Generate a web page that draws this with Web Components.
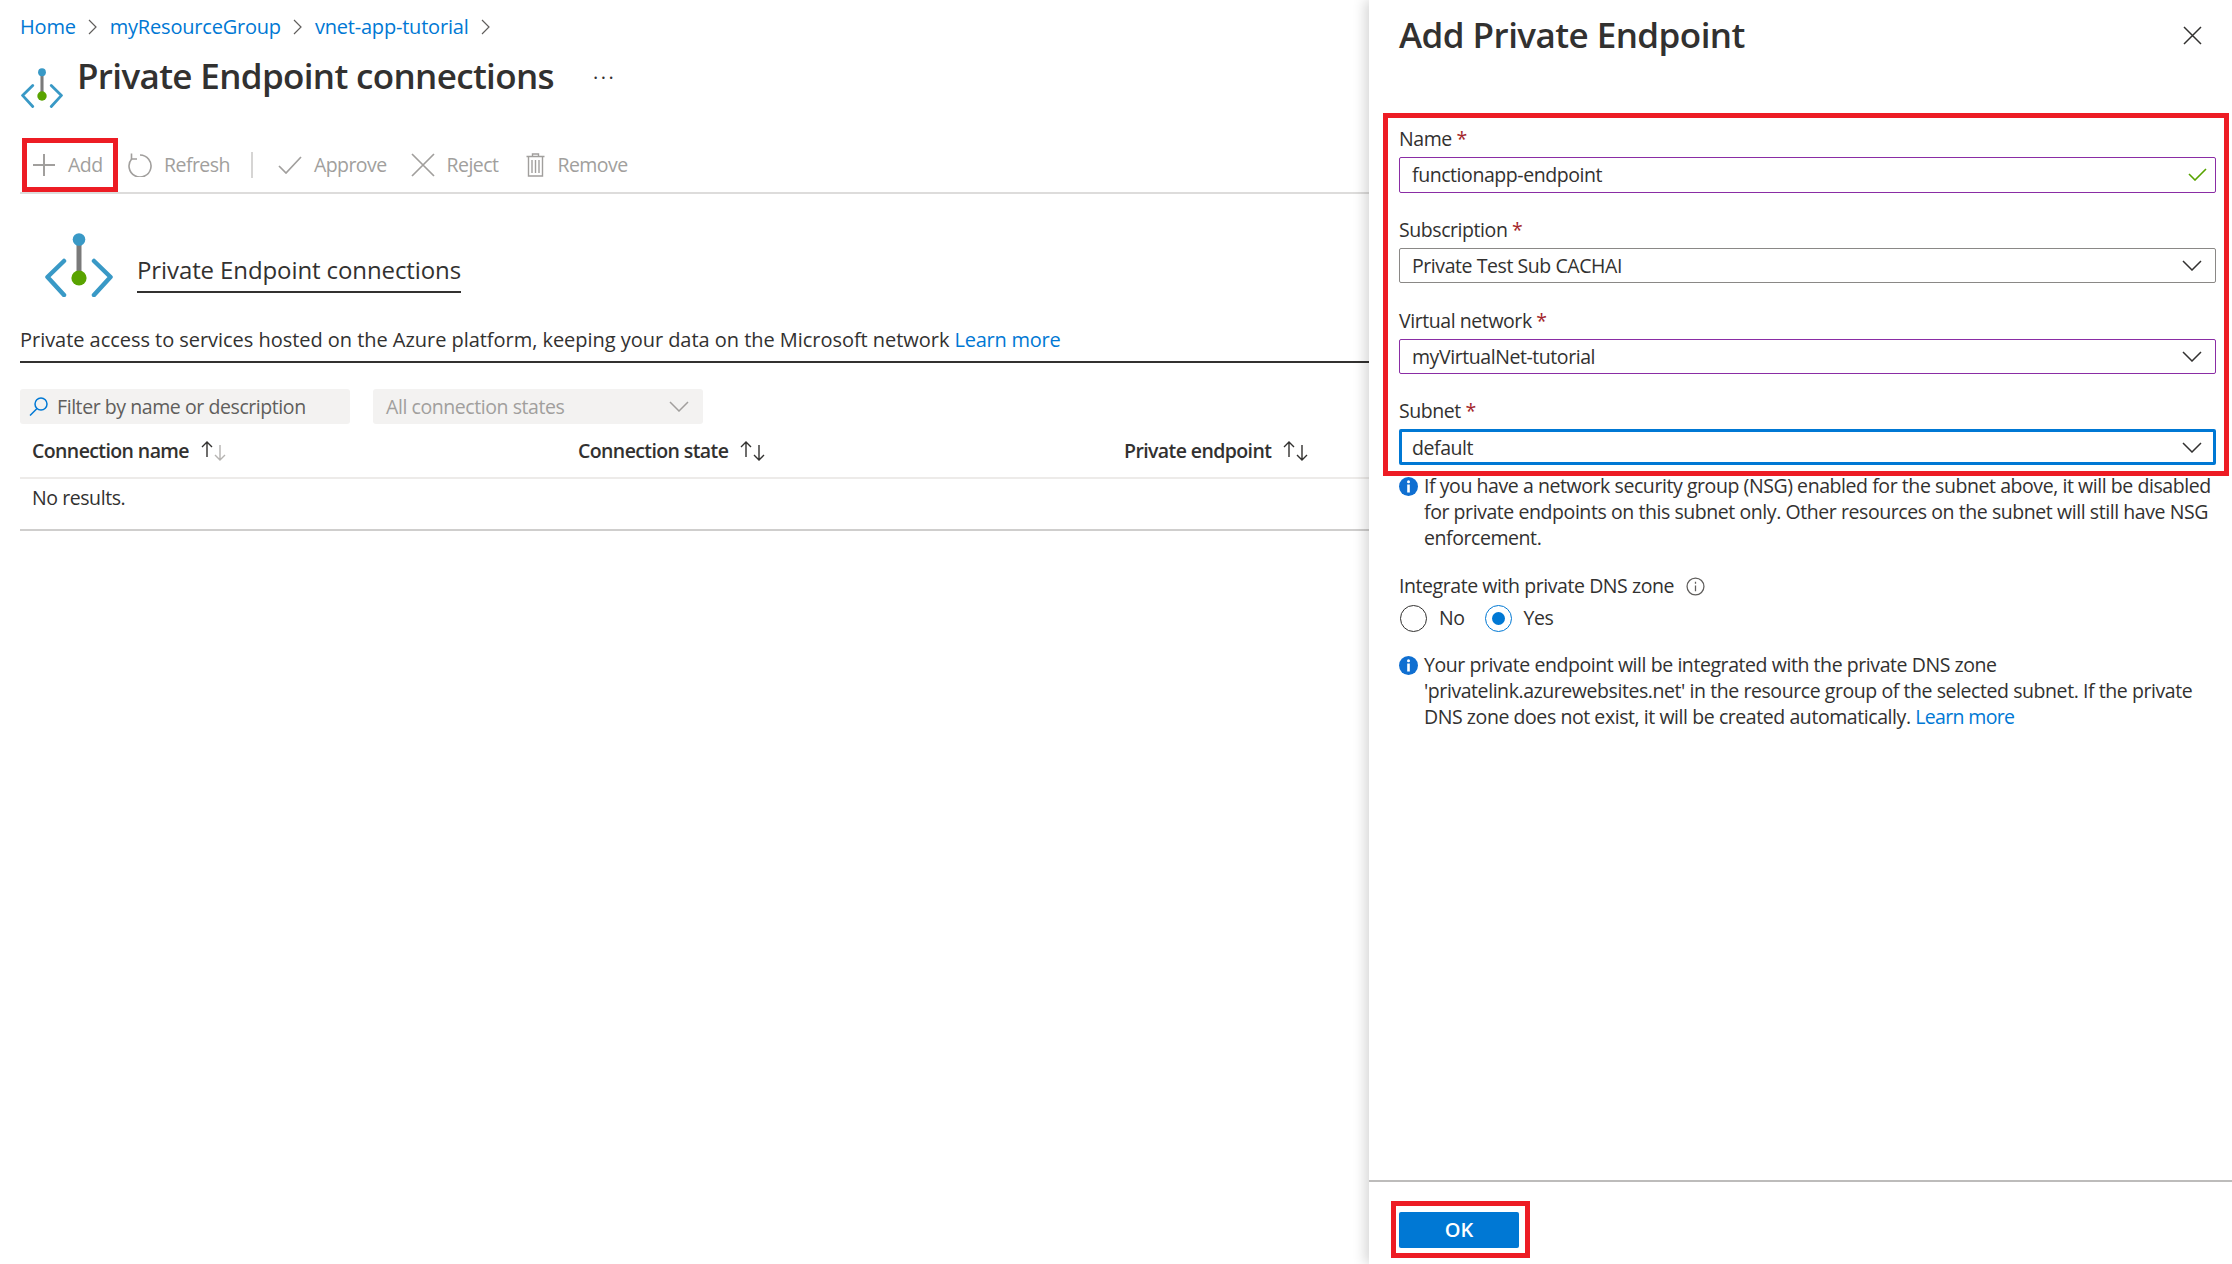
<!DOCTYPE html>
<html lang="en">
<head>
<meta charset="utf-8">
<title>Private Endpoint connections</title>
<style>
  html, body { margin: 0; height: 100%; background: #fff; }
  body { font: 19.500px/30px "Open Sans", "Liberation Sans", sans-serif; letter-spacing: -0.43px; color: #323130; overflow: hidden; }
  a { color: #0078d4; text-decoration: none; }
</style>
</head>
<body>
<pe-page></pe-page>

<script>
const ICONS = {
  endpoint: `<svg viewBox="0 0 68 64" width="100%" height="100%"><path d="M34 6v40" stroke="#7a7a7a" stroke-width="5"/><circle cx="34" cy="6.500" r="6.300" fill="#3999c6"/><circle cx="34" cy="45" r="7.600" fill="#59a300"/><path d="M19 28 2.500 44 19 62M49 28 65.500 44 49 62" fill="none" stroke="#3999c6" stroke-width="4.500" stroke-linecap="round" stroke-linejoin="round"/></svg>`,
  plus: `<svg viewBox="0 0 22 22" width="22" height="22"><path d="M11 0v22M0 11h22" stroke="currentColor" stroke-width="2"/></svg>`,
  refresh: `<svg viewBox="0 0 24 24" width="24" height="24" fill="none" stroke="currentColor" stroke-width="1.600"><path d="M12 2a11 11 0 1 1-8.200 3.700"/><path d="M3.500 0.500v5.500h5.500"/></svg>`,
  check: `<svg viewBox="0 0 24 18" width="24" height="18" fill="none" stroke="currentColor" stroke-width="1.700"><path d="M1 10l7 7L23 1"/></svg>`,
  cross: `<svg viewBox="0 0 24 24" width="24" height="24" fill="none" stroke="currentColor" stroke-width="1.700"><path d="M1 1l22 22M23 1 1 23"/></svg>`,
  trash: `<svg viewBox="0 0 19 24" width="19" height="24" fill="none" stroke="currentColor" stroke-width="1.400"><path d="M.5 3.500h18M6.500 3.500V1h6v2.500M2.500 3.500V23h14V3.500M6 7v13M9.500 7v13M13 7v13"/></svg>`,
  search: `<svg viewBox="0 0 19 19" width="19" height="19" fill="none" stroke="#0078d4" stroke-width="1.500"><circle cx="12" cy="7" r="6"/><path d="M8 11.500 1 18.500"/></svg>`,
  chevron: `<svg viewBox="0 0 20 11" width="20" height="11" fill="none" stroke="currentColor" stroke-width="1.500"><path d="M1 1l9 9 9-9"/></svg>`,
  close: `<svg viewBox="0 0 19 19" width="19" height="19" fill="none" stroke="#323130" stroke-width="1.500"><path d="M1 1l17 17M18 1 1 18"/></svg>`,
  valid: `<svg viewBox="0 0 19 13" width="19" height="13" fill="none" stroke="#57a300" stroke-width="1.600"><path d="M1 6l6 6L18 1"/></svg>`,
  info: `<svg viewBox="0 0 19 19" width="19" height="19"><circle cx="9.500" cy="9.500" r="9.500" fill="#0f6fd1"/><circle cx="9.500" cy="4.800" r="1.500" fill="#fff"/><rect x="8.200" y="7.500" width="2.600" height="8" fill="#fff"/></svg>`,
  infoOutline: `<svg viewBox="0 0 18 18" width="19" height="19" fill="none" stroke="#605e5c" stroke-width="1.200"><circle cx="9" cy="9" r="8"/><path d="M9 8v5.500M9 4.500v1.800"/></svg>`
};

function sortIcon(muted) {
  return `<svg viewBox="0 0 26 20" width="26" height="20" fill="none" stroke-width="1.400"><path d="M6 16V1M1 6l5-5 5 5" stroke="#323130"/><path d="M19 4v15M14 14l5 5 5-5" stroke="${muted ? '#b5b3b1' : '#323130'}"/></svg>`;
}

class PeBreadcrumb extends HTMLElement {
  connectedCallback() {
    const items = (this.getAttribute('items') || '').split('|');
    this.attachShadow({ mode: 'open' });
    this.shadowRoot.innerHTML = `
      <style>
        :host { display: flex; align-items: center; height: 54px; color: #0078d4; font-size: 20px; letter-spacing: -0.2px; }
        span { margin-right: 12px; }
        svg { margin-right: 13px; }
      </style>
      ${items.map(i => `<span>${i}</span><svg viewBox="0 0 9 16" width="9" height="16" fill="none" stroke="#605e5c" stroke-width="1.200"><path d="M1 1l7 7-7 7"/></svg>`).join('')}
    `;
  }
}

class PeIcon extends HTMLElement {
  connectedCallback() {
    this.attachShadow({ mode: 'open' });
    this.shadowRoot.innerHTML = `
      <style>:host { display: inline-flex; flex: none; align-items: center; justify-content: center; }</style>
      ${ICONS[this.getAttribute('name')]}
    `;
  }
}

class PeToolButton extends HTMLElement {
  connectedCallback() {
    this.attachShadow({ mode: 'open' });
    this.shadowRoot.innerHTML = `
      <style>
        :host { display: inline-flex; align-items: center; color: #a19f9d; letter-spacing: -0.55px; }
        pe-icon { margin-right: 12px; }
      </style>
      <pe-icon name="${this.getAttribute('icon')}"></pe-icon><slot></slot>
    `;
  }
}

class PeCallout extends HTMLElement {
  connectedCallback() {
    this.attachShadow({ mode: 'open' });
    this.shadowRoot.innerHTML = `
      <style>
        :host { display: flex; align-items: center; box-sizing: border-box; border: 5px solid #ed1c24; }
      </style>
      <slot></slot>
    `;
  }
}

class PeToolbar extends HTMLElement {
  connectedCallback() {
    this.attachShadow({ mode: 'open' });
    this.shadowRoot.innerHTML = `
      <style>
        :host { display: flex; align-items: center; height: 54px; border-bottom: 2px solid #dddcdb; }
        .add { width: 96px; height: 54px; margin-left: 2px; padding-left: 6px; }
        .add span { margin-left: 1px; }
        .sep { width: 2px; height: 26px; background: #d6d5d4; }
        .refresh { margin-left: 10px; margin-right: 21px; }
        .approve { margin-left: 25px; }
        .reject { margin-left: 24px; }
        .remove { margin-left: 28px; }
      </style>
      <pe-callout class="add"><pe-tool-button icon="plus"><span>Add</span></pe-tool-button></pe-callout>
      <pe-tool-button class="refresh" icon="refresh">Refresh</pe-tool-button>
      <div class="sep"></div>
      <pe-tool-button class="approve" icon="check">Approve</pe-tool-button>
      <pe-tool-button class="reject" icon="cross">Reject</pe-tool-button>
      <pe-tool-button class="remove" icon="trash">Remove</pe-tool-button>
    `;
  }
}

class PeIntro extends HTMLElement {
  connectedCallback() {
    this.attachShadow({ mode: 'open' });
    this.shadowRoot.innerHTML = `
      <style>
        :host { display: block; }
        .top { display: flex; padding: 39px 0 0 25px; height: 65px; }
        pe-icon { width: 68px; height: 64px; }
        h2 { margin: 18px 0 0 24px; height: 40px; font-size: 24px; font-weight: 500; line-height: 38px; letter-spacing: -0.1px; border-bottom: 2px solid #323130; }
        p { margin: 28px 0 0; height: 30px; padding-bottom: 5px; border-bottom: 2px solid #323130; font-size: 20px; line-height: 28px; letter-spacing: -0.04px; }
      </style>
      <div class="top">
        <pe-icon name="endpoint"></pe-icon>
        <h2><slot name="heading"></slot></h2>
      </div>
      <p><slot></slot></p>
    `;
  }
}

class PeFilters extends HTMLElement {
  connectedCallback() {
    this.attachShadow({ mode: 'open' });
    this.shadowRoot.innerHTML = `
      <style>
        :host { display: flex; gap: 23px; margin-top: 26px; }
        .box { box-sizing: border-box; display: flex; align-items: center; width: 330px; height: 35px; background: #f3f2f1; border-radius: 3px; line-height: 32px; }
        .search { padding-left: 9px; gap: 9px; color: #605e5c; }
        .state { padding: 0 14px 0 13px; justify-content: space-between; color: #a19f9d; }
      </style>
      <div class="box search"><pe-icon name="search"></pe-icon><span>Filter by name or description</span></div>
      <div class="box state"><span>All connection states</span><pe-icon name="chevron"></pe-icon></div>
    `;
  }
}

class PeTable extends HTMLElement {
  connectedCallback() {
    this.attachShadow({ mode: 'open' });
    this.shadowRoot.innerHTML = `
      <style>
        :host { display: block; }
        .head, .row { display: grid; grid-template-columns: 546px 546px 1fr; padding-left: 12px; }
        .head { height: 53px; align-items: center; border-bottom: 2px solid #edebe9; font-weight: 600; letter-spacing: -0.6px; line-height: 27px; }
        .head div { display: flex; align-items: center; gap: 12px; }
        .row { height: 46px; padding-top: 4px; border-bottom: 2px solid #cfcecd; align-items: start; }
      </style>
      <div class="head">
        <div>Connection name ${sortIcon(true)}</div>
        <div>Connection state ${sortIcon(false)}</div>
        <div>Private endpoint ${sortIcon(false)}</div>
      </div>
      <div class="row"><div><slot></slot></div></div>
    `;
  }
}

class PeField extends HTMLElement {
  connectedCallback() {
    const tone = this.getAttribute('tone') || 'plain';
    const select = this.hasAttribute('select');
    this.attachShadow({ mode: 'open' });
    this.shadowRoot.innerHTML = `
      <style>
        :host { display: block; margin-bottom: 22.300px; }
        :host(:last-of-type) { margin-bottom: 0; }
        label { display: block; height: 30px; margin-bottom: 3px; line-height: 29px; }
        b { color: #a4262c; font-weight: 400; }
        .input { box-sizing: border-box; display: flex; align-items: center; justify-content: space-between; height: 35.500px; padding: 0 8px 0 12px; border-radius: 2px; border: 1.500px solid #8a8886; color: #323130; line-height: 29px; }
        .select { padding-right: 13px; }
        .violet { border-color: #8a2da5; }
        .focus { border: 3px solid #0078d4; padding-left: 10px; padding-right: 11px; }
      </style>
      <label>${this.getAttribute('label')} <b>*</b></label>
      <div class="input ${tone} ${select ? 'select' : ''}"><span><slot></slot></span><pe-icon name="${select ? 'chevron' : 'valid'}"></pe-icon></div>
    `;
  }
}

class PeInfoNote extends HTMLElement {
  connectedCallback() {
    this.attachShadow({ mode: 'open' });
    this.shadowRoot.innerHTML = `
      <style>
        :host { display: flex; gap: 6px; line-height: 26px; margin-left: 30px; margin-right: 14px; }
        pe-icon { margin-top: 4px; height: 19px; }
      </style>
      <pe-icon name="info"></pe-icon><div><slot></slot></div>
    `;
  }
}

class PeRadio extends HTMLElement {
  connectedCallback() {
    const on = this.hasAttribute('checked');
    this.attachShadow({ mode: 'open' });
    this.shadowRoot.innerHTML = `
      <style>
        :host { display: inline-flex; align-items: center; gap: 12px; }
        i { box-sizing: border-box; width: 27px; height: 27px; border-radius: 50%; border: 1.500px solid ${on ? '#0078d4' : '#323130'}; display: flex; align-items: center; justify-content: center; }
        i::after { content: ""; width: 13px; height: 13px; border-radius: 50%; background: ${on ? '#0078d4' : 'transparent'}; }
      </style>
      <i></i><slot></slot>
    `;
  }
}

class PeBlade extends HTMLElement {
  connectedCallback() {
    this.attachShadow({ mode: 'open' });
    this.shadowRoot.innerHTML = `
      <style>
        :host { display: flex; flex-direction: column; box-sizing: border-box; width: 863px; height: 1264px; background: #fff; box-shadow: -4px 0 12px rgba(0,0,0,.16); position: relative; }
        header { display: flex; align-items: center; justify-content: space-between; height: 70px; margin-bottom: 43px; padding: 0 30px 0 30px; }
        h1 { margin: 0; font-size: 35px; font-weight: 600; line-height: 68px; letter-spacing: -0.55px; }
        .form { display: block; height: 363px; margin: 0 3px 0 14px; padding: 6px 8px 0 11px; }
        .dns { margin: 20px 0 0 30px; display: flex; align-items: center; gap: 12px; }
        .radios { display: flex; gap: 20px; margin: 2px 0 19px 31px; }
        .first { margin-top: -2.600px; }
        footer { margin-top: auto; height: 84px; box-sizing: border-box; border-top: 2px solid #bdbcbb; padding: 19px 0 0 22px; }
        .wrap { width: 139px; height: 57px; padding: 6px 0 0 3px; align-items: flex-start; }
        button { width: 120px; height: 36px; border: 0; border-radius: 2px; background: #0078d4; color: #fff; font: 600 20px/36px "Open Sans", "Liberation Sans", sans-serif; padding: 0; }
      </style>
      <header><h1><slot name="title"></slot></h1><pe-icon name="close"></pe-icon></header>
      <pe-callout class="form"><div style="width:100%"><slot name="fields"></slot></div></pe-callout>
      <pe-info-note class="first"><slot name="note-nsg"></slot></pe-info-note>
      <div class="dns">Integrate with private DNS zone <pe-icon name="infoOutline"></pe-icon></div>
      <div class="radios"><pe-radio>No</pe-radio><pe-radio checked>Yes</pe-radio></div>
      <pe-info-note><slot name="note-dns"></slot></pe-info-note>
      <footer><pe-callout class="wrap"><button>OK</button></pe-callout></footer>
    `;
  }
}

class PePage extends HTMLElement {
  connectedCallback() {
    this.attachShadow({ mode: 'open' });
    this.shadowRoot.innerHTML = `
      <style>
        :host { display: flex; height: 1264px; overflow: hidden; }
        main { box-sizing: border-box; width: 1369px; padding-left: 20px; flex: none; }
        .title { display: flex; height: 84px; }
        .title pe-icon { width: 42px; height: 40px; margin-top: 14px; margin-left: 1px; }
        h1 { margin: 0 0 0 14px; font-size: 35px; font-weight: 600; line-height: 44px; letter-spacing: -0.65px; }
        .more { margin: 0 0 0 39px; line-height: 36px; font-size: 20px; letter-spacing: 2.500px; }
        a { color: #0078d4; text-decoration: none; }
        pe-intro a { letter-spacing: -0.25px; }
        pe-blade a { letter-spacing: -0.65px; }
      </style>
      <main>
        <pe-breadcrumb items="Home|myResourceGroup|vnet-app-tutorial"></pe-breadcrumb>
        <div class="title">
          <pe-icon name="endpoint"></pe-icon>
          <h1>Private Endpoint connections</h1>
          <span class="more">...</span>
        </div>
        <pe-toolbar></pe-toolbar>
        <pe-intro>
          <span slot="heading">Private Endpoint connections</span>
          Private access to services hosted on the Azure platform, keeping your data on the Microsoft network <a href="#">Learn more</a>
        </pe-intro>
        <pe-filters></pe-filters>
        <pe-table>No results.</pe-table>
      </main>
      <pe-blade>
        <span slot="title">Add Private Endpoint</span>
        <div slot="fields">
          <pe-field label="Name" tone="violet">functionapp-endpoint</pe-field>
          <pe-field label="Subscription" select>Private Test Sub CACHAI</pe-field>
          <pe-field label="Virtual network" tone="violet" select>myVirtualNet-tutorial</pe-field>
          <pe-field label="Subnet" tone="focus" select>default</pe-field>
        </div>
        <span slot="note-nsg">If you have a network security group (NSG) enabled for the subnet above, it will be disabled for private endpoints on this subnet only. Other resources on the subnet will still have NSG enforcement.</span>
        <span slot="note-dns">Your private endpoint will be integrated with the private DNS zone 'privatelink.azurewebsites.net' in the resource group of the selected subnet. If the private DNS zone does not exist, it will be created automatically. <a href="#">Learn more</a></span>
      </pe-blade>
    `;
  }
}

customElements.define('pe-icon', PeIcon);
customElements.define('pe-breadcrumb', PeBreadcrumb);
customElements.define('pe-tool-button', PeToolButton);
customElements.define('pe-callout', PeCallout);
customElements.define('pe-toolbar', PeToolbar);
customElements.define('pe-intro', PeIntro);
customElements.define('pe-filters', PeFilters);
customElements.define('pe-table', PeTable);
customElements.define('pe-field', PeField);
customElements.define('pe-info-note', PeInfoNote);
customElements.define('pe-radio', PeRadio);
customElements.define('pe-blade', PeBlade);
customElements.define('pe-page', PePage);
</script>
</body>
</html>
